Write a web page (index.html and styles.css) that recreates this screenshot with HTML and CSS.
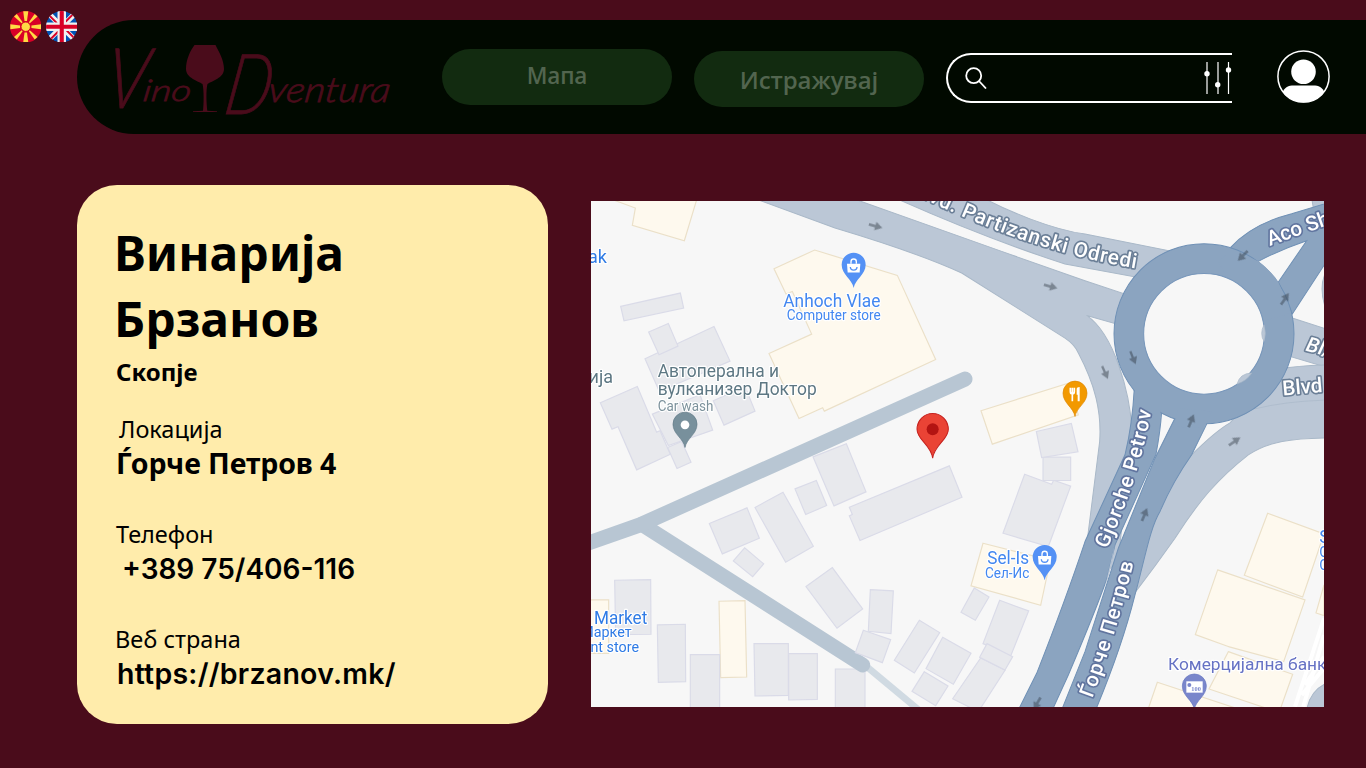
FILE: index.html
```html
<!DOCTYPE html>
<html lang="mk">
<head>
<meta charset="utf-8">
<title>VinoDventura</title>
<link rel="stylesheet" href="styles.css">
</head>
<body>
<div class="page">
  <header class="top">
    <div class="langs">
      <svg class="flag" viewBox="-50 -50 100 100">
        <circle r="50" fill="#d80027"/>
        <g fill="#ffda44">
          <path id="ray" d="M-8 -49 L8 -49 L4 -18 L-4 -18Z"/>
          <use href="#ray" transform="rotate(180)"/><use href="#ray" transform="rotate(90)"/><use href="#ray" transform="rotate(270)"/>
          <path id="diag" d="M-6 -49 L6 -49 L2 -17 L-2 -17Z" transform="rotate(42)"/>
          <use href="#diag" transform="rotate(96)"/><use href="#diag" transform="rotate(180)"/><use href="#diag" transform="rotate(276)"/>
          <circle r="15" stroke="#d80027" stroke-width="3"/>
        </g>
      </svg>
      <svg class="flag" viewBox="-50 -50 100 100">
        <clipPath id="round"><circle r="50"/></clipPath>
        <g clip-path="url(#round)">
          <circle r="50" fill="#0052b4"/>
          <path d="M-50 -50L50 50M50 -50L-50 50" stroke="#f0f0f0" stroke-width="17"/>
          <path d="M-50 -46L-8 -4M46 -50L4 -8M50 46L8 4M-46 50L-4 8" stroke="#d80027" stroke-width="6"/>
          <path d="M0 -50V50M-50 0H50" stroke="#f0f0f0" stroke-width="27"/>
          <path d="M0 -50V50M-50 0H50" stroke="#d80027" stroke-width="13"/>
        </g>
      </svg>
    </div>
    <div class="bar">
      <svg class="logo" viewBox="100 34 296 90">
        <g class="script">
          <text transform="translate(103 108) skewX(-8)" font-size="84" textLength="42" lengthAdjust="spacingAndGlyphs">V</text>
          <text transform="translate(142 101) skewX(-8)" font-size="30" textLength="48" lengthAdjust="spacingAndGlyphs">ino</text>
          <text transform="translate(222 114) skewX(-10)" font-size="84" textLength="46" lengthAdjust="spacingAndGlyphs">D</text>
          <text transform="translate(267 102) skewX(-8)" font-size="35" textLength="122" lengthAdjust="spacingAndGlyphs">ventura</text>
        </g>
        <path fill="#4a0c1b" d="M194.500 45H215.500C219 52 224 60 224 69C224 78 212 81 207.500 84C205.800 90 206.500 104 207.300 110.700L217 111.200V112H193V111.200L203 110.700C203.800 104 204 90 202.500 84C198 81 186 78 186 69C186 60 190 51 194.500 45Z"/>
      </svg>
      <nav class="nav">
        <a class="pill pill-map">Мапа</a>
        <a class="pill pill-explore">Истражувај</a>
      </nav>
      <div class="search">
        <svg class="lens" viewBox="0 0 22 22"><circle cx="8.700" cy="8.700" r="7.500"/><path d="M14 14L21 21.500"/></svg>
        <svg class="sliders" viewBox="0 0 28 34">
          <path d="M3 1V33M14 1V33M24.500 1V33"/>
          <circle cx="3" cy="12.700" r="2.700"/><circle cx="13.700" cy="23.700" r="2.700"/><circle cx="24.500" cy="9" r="2.700"/>
        </svg>
      </div>
      <svg class="user" viewBox="0 0 53 53">
        <clipPath id="face"><circle cx="26.500" cy="26.500" r="26"/></clipPath>
        <circle cx="26.500" cy="26.500" r="25.600" fill="none" stroke="#fff" stroke-width="1.500"/>
        <circle cx="26.500" cy="21.700" r="12.300" fill="#fff"/>
        <path clip-path="url(#face)" fill="#fff" d="M5 43C8 37 11 35.500 17 35.500H36C42 35.500 45 37 48 43V53H5Z"/>
      </svg>
    </div>
  </header>
  <main class="content">
    <section class="card">
      <h1 class="name">Винарија<br>Брзанов</h1>
      <p class="city">Скопје</p>
      <div class="field"><span class="label label-loc">Локација</span><span class="value value-loc">Ѓорче Петров 4</span></div>
      <div class="field"><span class="label label-tel">Телефон</span><span class="value value-tel">+389 75/406-116</span></div>
      <div class="field"><span class="label label-web">Веб страна</span><span class="value value-web">https://brzanov.mk/</span></div>
    </section>
    <svg class="map" viewBox="18 19 2199 1517" preserveAspectRatio="none">
      <defs>
        <path id="pin" d="M0 70C-5 42 -36 30 -36 0A36 36 0 0 1 36 0C36 30 5 42 0 70Z"/>
        <path id="arrow" d="M-20 -3H0V-13L22 0L0 13V4H-20Z"/>
        <path id="r1" d="M975 -8Q1250 130 1500 190Q1580 210 1720 232"/>
        <path id="r2" d="M2054 154Q2130 125 2290 70"/>
        <path id="r3" d="M1566 1063Q1671 830 1704 620"/>
        <path id="r4" d="M1522 1510Q1590 1330 1653 1075"/>
      </defs>
      <rect class="ground" x="0" y="0" width="2300" height="1600"/>

      <g class="shop">
        <path d="M75 12L151 40L142 92L298 138L336 12Z"/>
        <path d="M567 222L689 166L937 242L1052 494L718 649L713 639L642 671L552 476L680 418L622 290L603 298Z"/>
        <path d="M1188 648L1450 565L1480 660L1222 748Z"/>
        <path d="M0 1215H71V1375H0Z"/><path d="M402 1219L480 1217L485 1446L407 1448Z"/>
        <path d="M1194 1045L1396 1096L1367 1231L1158 1173Z"/>
        <path d="M2048 955L2217 1017L2153 1206L1978 1141Z"/><path d="M2217 1170L2193 1254L2217 1262Z"/>
        <path d="M1930 1370L2123 1438L2085 1545H2060L1872 1482Z"/>
        <path d="M1898 1125L2160 1215L2096 1400L1930 1355L1936 1357L1831 1319Z"/>
        <path d="M1717 1462L2000 1555H1685Z"/>
      </g>
      <g class="house">
        <path d="M107 335L286 295L296 340L117 378Z"/><path d="M180 492L387 395L435 499L223 590Z"/><path d="M191 412L250 386L279 454L222 480Z"/>
        <path d="M385 618L480 575L510 649L417 691Z"/><path d="M202 658L345 600L383 706L250 752Z"/>
        <path d="M46 624L157 575L215 712L225 708L256 778L155 825L99 696L81 703Z"/><path d="M248 758L290 740L318 802L276 821Z"/>
        <path d="M373 986L486 939L523 1030L412 1077Z"/><path d="M510 938L594 892L685 1054L602 1102Z"/><path d="M445 1098L479 1059L536 1107L503 1145Z"/>
        <path d="M630 882L694 857L725 932L662 959Z"/><path d="M684 786L784 747L843 891L747 933Z"/>
        <path d="M793 937L1093 813L1131 907L825 1037L793 963L802 959Z"/>
        <path d="M663 1175L742 1118L833 1242L756 1300Z"/>
        <path d="M89 1156L197 1154L198 1318L92 1319Z"/><path d="M217 1290L301 1288L302 1460L220 1462Z"/><path d="M316 1379H404V1550H316Z"/>
        <path d="M507 1346H610V1501L510 1503Z"/><path d="M611 1376H697V1513L611 1515Z"/><path d="M751 1422H840V1550H751Z"/>
        <path d="M856 1184L925 1188L918 1316L850 1309Z"/>
        <path d="M1003 1276L1064 1313L988 1434L928 1396Z"/><path d="M1073 1327L1158 1375L1105 1468L1023 1421Z"/><path d="M1018 1430L1089 1473L1052 1532L981 1489Z"/>
        <path d="M1168 1179L1212 1206L1171 1276L1128 1252Z"/><path d="M1244 1216L1331 1248L1277 1383L1194 1346Z"/><path d="M1187 1389L1260 1426L1180 1550L1103 1511Z"/><path d="M1206 1346L1283 1385L1260 1425L1184 1387Z"/>
        <path d="M1319 838L1400 868L1406 856L1457 874L1390 1055L1254 1015Z"/><path d="M1374 787H1457V857H1374Z"/><path d="M1354 710L1459 686L1479 771L1370 788Z"/>
      </g>

      <path class="trail" d="M845 1415L1005 1548"/>
      <path class="alley" d="M170 988L833 1410"/>
      <path class="alley" d="M0 1048L165 990L1140 553"/>
      <path class="house" d="M835 1306L917 1334L892 1403L811 1373Z"/>

      <g class="light">
        <path d="M510 12L750 100Q1000 175 1130 235L1440 430Q1470 450 1480 475C1530 570 1550 650 1544 740L1505 1050L1480 1200L1600 1100L1640 700C1635 600 1590 420 1505 362L1610 392L1640 305L1500 258L1250 170L805 12Z"/>
        <path d="M935 12Q1200 130 1440 208L1680 252L1760 170L1500 118C1400 105 1260 45 1200 12Z"/>
        <path d="M2110 366L2230 405V519L2105 482Z"/>
        <path d="M2085 522Q2140 512 2230 510V729C2120 730 2050 740 1990 780C1900 850 1840 920 1770 1030Q1710 1115 1650 1193L1600 1100L1820 780Q1890 710 1935 684Z"/>
        <path d="M2180 10H2230V40H2185Z"/><path d="M2230 220Q2195 270 2225 350Z"/>
        <path d="M2217 1468Q2175 1490 2165 1545H2230Z"/>
      </g>
      <path class="seam" d="M2010 642Q2100 620 2217 616"/>
      <g class="hatch"><path d="M2130 1535L2217 1270M2155 1535L2217 1320M2150 1500L2217 1420M2160 1470L2217 1385"/></g>

      <g class="dark">
        <path d="M1648 580Q1642 690 1620 780L1500 1040Q1440 1220 1355 1435L1300 1545H1402L1450 1440Q1535 1240 1566 1150L1590 1050L1713 778Q1726 710 1730 650Z"/>
        <path d="M1775 660L1710 790L1600 1060Q1555 1200 1500 1370L1430 1545H1532C1580 1430 1620 1320 1650 1200C1680 1090 1695 1000 1725 950C1755 880 1785 830 1820 780L1865 688Z"/>
        <path d="M1937 158C1985 105 2050 75 2120 57L2230 24V192L2122 358L2080 262L2165 138Q2085 165 2020 200L1960 210Z"/>
        <circle cx="1857" cy="417" r="270"/>
        <path class="fill" d="M1652 560L1725 640L1728 670L1643 670Z"/><path class="fill" d="M1780 640L1880 650L1858 700L1765 695Z"/><path class="fill" d="M1942 165L2020 200Q2060 230 2080 262L2118 355L2000 390L1900 200Z"/>
      </g>
      <circle class="island" cx="1857" cy="417" r="181"/>
      <g class="lane"><path d="M2037 390Q2023 417 2037 440Q2045 417 2037 390Z"/><path d="M1956 568Q1965 535 2000 535Q1985 558 1956 568Z"/></g>
      <path class="gap" d="M1590 1045L1566 1150L1558 1180L1575 1130Z"/>

      <g class="arrows">
        <use href="#arrow" transform="translate(871 94) rotate(16)"/><use href="#arrow" transform="translate(1396 275) rotate(16)"/><use href="#arrow" transform="translate(1560 532) rotate(66)"/>
        <use href="#arrow" transform="translate(1644 488) rotate(68)"/><use href="#arrow" transform="translate(1974 183) rotate(136)"/><use href="#arrow" transform="translate(2099 313) rotate(-55)"/>
        <use href="#arrow" transform="translate(1818 679) rotate(-67)"/><use href="#arrow" transform="translate(1948 740) rotate(-34)"/><use href="#arrow" transform="translate(1678 960) rotate(-67)"/><use href="#arrow" transform="translate(1357 1525) rotate(120)"/>
      </g>

      <g class="road">
        <text><textPath href="#r1" textLength="718">Blvd. Partizanski Odredi</textPath></text>
        <text class="navy"><textPath href="#r2">Aco Shopov</textPath></text>
        <text class="navy"><textPath href="#r3" textLength="437">Gjorche Petrov</textPath></text>
        <text class="navy"><textPath href="#r4" textLength="425">Ѓорче Петров</textPath></text>
        <text transform="translate(2094 602) rotate(-5)">Blvd Sv</text>
        <text transform="translate(2160 467) rotate(15)" font-style="italic">Bl/</text>
      </g>

      <g class="place">
        <text class="blue deep" x="66" y="206" text-anchor="end">ak</text>
        <text class="blue" x="595" y="337" textLength="291" lengthAdjust="spacingAndGlyphs">Anhoch Vlae</text><text class="blue small" x="605" y="375" textLength="282" lengthAdjust="spacingAndGlyphs">Computer store</text>
        <text class="gray" x="84" y="565" text-anchor="end">ија</text>
        <text class="gray" x="218" y="546" textLength="364" lengthAdjust="spacingAndGlyphs">Автоперална и</text><text class="gray" x="218" y="600" textLength="477" lengthAdjust="spacingAndGlyphs">вулканизер Доктор</text><text class="gray small pale" x="218" y="648" textLength="167" lengthAdjust="spacingAndGlyphs">Car wash</text>
        <text class="blue deep" x="27" y="1286" textLength="160" lengthAdjust="spacingAndGlyphs">Market</text><text class="blue deep small" x="140" y="1325" text-anchor="end">Маркет</text><text class="blue deep small" x="162" y="1371" text-anchor="end">unt store</text>
        <text class="blue" x="1207" y="1107" textLength="125" lengthAdjust="spacingAndGlyphs">Sel-Is</text><text class="blue small" x="1200" y="1150" textLength="133" lengthAdjust="spacingAndGlyphs">Сел-Ис</text>
        <text class="violet" x="1749" y="1424">Комерцијална банка</text>
        <text class="blue" x="2203" y="1045">S</text><text class="blue small" x="2203" y="1085">С</text><text class="blue small" x="2203" y="1126">С</text>
      </g>

      <g transform="translate(806 210)"><use href="#pin" fill="#5491f5"/><path fill="#fff" d="M-20 -3H20L18 23H-18Z"/><path class="bag" d="M-8 -3V-9A8 8 0 0 1 8 -9V-3"/><path class="smile" d="M-10 7A10 9 0 0 0 10 7"/></g>
      <g transform="translate(1379 1086)"><use href="#pin" fill="#5491f5"/><path fill="#fff" d="M-20 -3H20L18 23H-18Z"/><path class="bag" d="M-8 -3V-9A8 8 0 0 1 8 -9V-3"/><path class="smile" d="M-10 7A10 9 0 0 0 10 7"/></g>
      <g transform="translate(300 688)"><use href="#pin" fill="#78909c" stroke="#5c7683" stroke-width="2"/><circle cy="2" r="13" fill="#fff"/></g>
      <g transform="translate(1470 595)"><use href="#pin" fill="#f29900" stroke="#dd8500" stroke-width="2"/><path d="M-14 -16V-5Q-14 2 -8 2Q-2 2 -2 -5V-16M-8 -16V24" fill="none" stroke="#fff" stroke-width="5"/><path d="M5 24V-12Q5 -18 14 -18V24H8V5H5Z" fill="#fff"/></g>
      <g transform="translate(1828 1473)"><use href="#pin" fill="#7986cb" stroke="#6775bf" stroke-width="2"/><path fill="#fff" d="M-24 -14H25V20H-24Z"/><circle cx="-15" cy="-3" r="6" fill="#7986cb"/><text class="note" x="-9" y="14">100</text></g>
      <path fill="#ea4335" stroke="#c5221f" stroke-width="3" d="M1043 790C1038 750 996 735 996 703A47 47 0 0 1 1090 703C1090 735 1048 750 1043 790Z"/><circle cx="1043" cy="703" r="18" fill="#b31412"/>
    </svg>
  </main>
</div>
</body>
</html>
```
FILE: styles.css
```css
* { box-sizing: border-box; }
body { margin: 0; background: #4a0c1b; font-family: "Noto Sans", sans-serif; color: #000; }
.page { width: 1366px; height: 768px; overflow: hidden; }

.top { display: grid; grid-template-columns: 77px 1fr; height: 134px; }
.langs { display: flex; gap: 4.500px; padding: 10.700px 0 0 9.800px; }
.flag { width: 31.500px; height: 31.500px; flex: none; }
.bar { display: flex; align-items: flex-start; margin-top: 19.500px; height: 114.500px; padding-left: 23px; background: #010900; border-radius: 57px 0 0 57px; }
.logo { width: 296px; height: 90px; margin-top: 14.500px; overflow: visible; }
.script { font-family: Lato, sans-serif; font-style: italic; font-weight: 300; fill: #4a0c1b; stroke: #4a0c1b; stroke-width: .8; }

.nav { display: flex; gap: 22px; margin-left: 46px; padding-top: 29px; }
.pill { display: block; width: 230px; height: 56.500px; border-radius: 28px; background: #122b10; color: #52654f; font-family: "Open Sans", sans-serif; font-weight: 600; text-align: center; }
.pill-map { font-size: 22.500px; line-height: 53px; letter-spacing: -.2px; }
.pill-explore { margin-top: 2px; font-size: 24px; line-height: 57px; letter-spacing: -.1px; }

.search { display: flex; justify-content: space-between; width: 285.500px; height: 49.500px; margin: 33.500px 0 0 22px; border: 2px solid #fff; border-right: 0; border-radius: 25px 0 0 25px; padding-left: 17px; }
.lens { width: 22px; height: 22px; margin-top: 12px; fill: none; stroke: #fff; stroke-width: 1.800; }
.sliders { width: 28px; height: 34px; margin-top: 6px; fill: #fff; stroke: #fff; stroke-width: 1.200; }
.sliders circle { stroke: none; }
.user { width: 53px; height: 53px; margin: 30.500px 0 0 45.500px; }

.content { display: flex; align-items: flex-start; gap: 43.500px; padding: 51px 0 0 77px; }
.card { width: 470.500px; height: 539px; padding: 35px 38px 0; border-radius: 40px; background: #ffecab; }
.name { margin: 0 0 0 -1px; font-size: 48px; line-height: 66px; font-weight: 700; }
.city { margin: 0 0 19.500px 1px; font-size: 24px; line-height: 40px; font-weight: 700; }
.field { display: flex; flex-direction: column; height: 68px; margin-bottom: 37px; }
.label, .value { line-height: 34px; white-space: nowrap; }
.label { font-size: 23.500px; }
.label-loc { padding-left: 4px; }
.label-tel { padding-left: 1px; }
.value { font-size: 28.500px; font-weight: 700; padding-left: 1px; }
.value-loc { letter-spacing: -.1px; }
.value-tel { font-family: Inter, sans-serif; font-size: 28px; font-weight: 600; line-height: 36px; padding-left: 7px; }
.value-web { font-family: Inter, sans-serif; font-size: 28.500px; font-weight: 600; line-height: 36px; padding-left: 2px; letter-spacing: .25px; }

.map { display: block; width: 733px; height: 506px; margin-top: 16px; }
.ground, .island { fill: #f7f7f7; }
.island { stroke: #7796ba; stroke-width: 3; }
.shop { fill: #fef9ee; stroke: #ebe0c8; stroke-width: 3.500; }
.house { fill: #e8e9ed; stroke: #dadbe8; stroke-width: 3.500; }
.alley { fill: none; stroke: #b8c6d3; stroke-width: 45; stroke-linecap: round; stroke-linejoin: round; }
.trail { fill: none; stroke: #d0dae2; stroke-width: 20; }
.light { fill: #bbc7d6; stroke: #a9b8c8; stroke-width: 3; }
.seam { fill: none; stroke: #a9b8c8; stroke-width: 2; }
.hatch { fill: none; stroke: #fff; stroke-width: 12; }
.dark { fill: #8ba4c0; stroke: #6f90b5; stroke-width: 3; }
.fill { stroke: none; }
.lane { fill: #bbc7d6; stroke: #a9b8c8; stroke-width: 2; }
.gap { fill: #bbc7d6; }
.arrows { fill: #2d3640; opacity: .45; }
.road { font-family: Roboto, sans-serif; font-weight: 500; font-size: 62px; fill: #fff; stroke: #6b7f97; stroke-width: 10; paint-order: stroke; stroke-linejoin: round; }
.navy { stroke: #61759f; }
.place { font: 400 54px Roboto, sans-serif; stroke: #fff; stroke-width: 7; paint-order: stroke; stroke-linejoin: round; }
.small { font-size: 43px; }
.blue { fill: #4387f0; }
.deep { fill: #2f7be5; }
.gray { fill: #5d7783; }
.pale { fill: #7d929c; }
.violet { fill: #6672c4; font-size: 52px; }
.bag { fill: none; stroke: #fff; stroke-width: 4; }
.smile { fill: none; stroke: #5491f5; stroke-width: 4; }
.note { font: 700 19px "Liberation Serif", serif; fill: #7986cb; stroke: none; }
```
